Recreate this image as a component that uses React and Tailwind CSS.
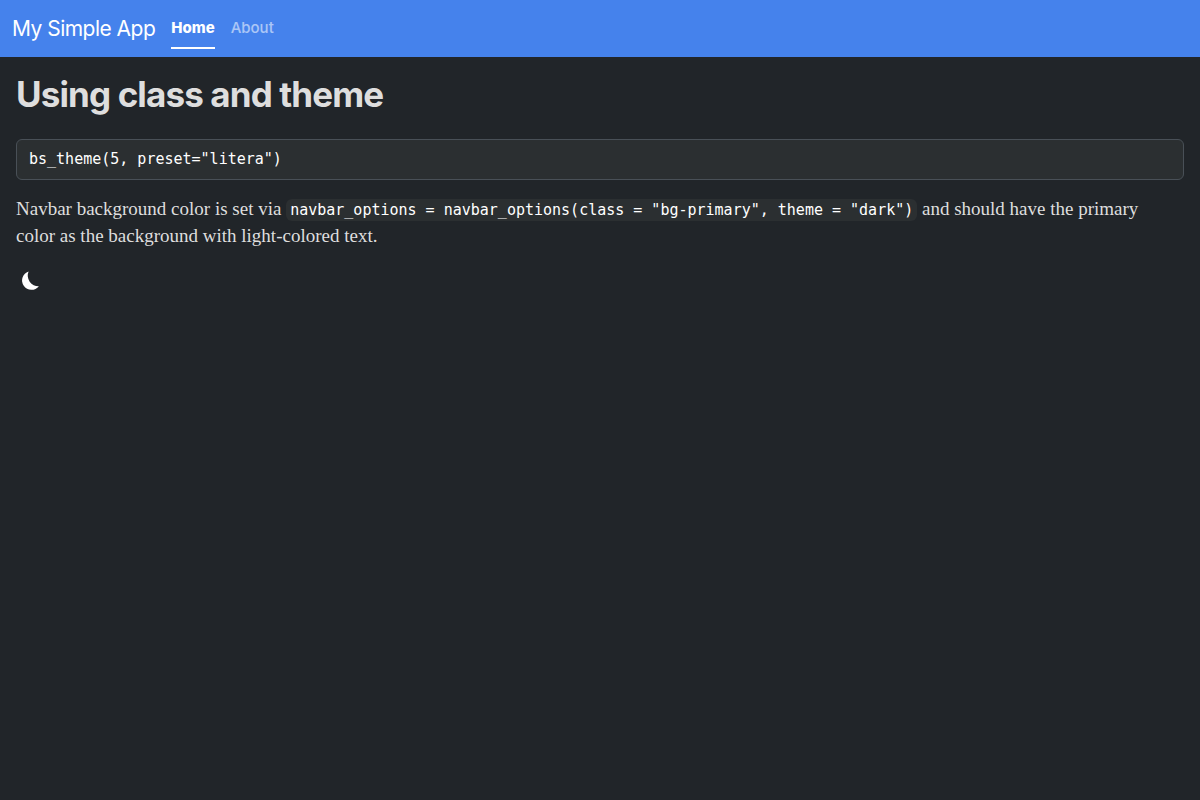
export default function App() {
  return (
    <div className="min-h-screen bg-[#212529] font-['Liberation_Serif',serif] text-[19px] leading-[27px] text-[#dedede]">
      <nav className="flex h-[57px] items-center bg-[#4582ec] px-3 font-[Inter,sans-serif]">
        <a href="#" className="mr-4 text-[21px] leading-8 text-white tracking-tight">
          My Simple App
        </a>
        <ul className="flex gap-4 text-[15px] leading-6">
          <li>
            <a href="#home" aria-current="page" className="block border-b-2 border-white pt-2 pb-[7px] font-extrabold text-white">
              Home
            </a>
          </li>
          <li>
            <a href="#about" className="block border-b-2 border-transparent pt-2 pb-[7px] font-medium text-white/55">
              About
            </a>
          </li>
        </ul>
      </nav>
      <main className="p-4">
        <h1 className="mb-6 font-[Inter,sans-serif] text-[35px] leading-[42px] font-bold tracking-tight">
          Using class and theme
        </h1>
        <pre className="mb-[15px] rounded-md border border-[#495057] bg-[#2b2f31] px-3 py-2 text-[15px] leading-[23px] text-white">
          <code className="block font-['DejaVu_Sans_Mono',monospace]">bs_theme(5, preset="litera")</code>
        </pre>
        <p className="mb-[15px] pr-4">
          Navbar background color is set via{" "}
          <code className="rounded-md bg-[#2b2f31] px-1 py-[2px] font-['DejaVu_Sans_Mono',monospace] text-[15px] leading-none text-white">
            navbar_options = navbar_options(class = "bg-primary", theme = "dark")
          </code>{" "}
          and should have the primary color as the background with light-colored text.
        </p>
        <button type="button" aria-label="Switch to light mode" className="ml-[2px] block pt-1 text-white">
          <svg viewBox="0 0 24 24" className="size-6" fill="currentColor" aria-hidden="true">
            <path d="M10.6 3.5A9.4 9.4 0 1 0 20.9 18.2A10.6 10.6 0 0 1 10.6 3.5Z" />
          </svg>
        </button>
      </main>
    </div>
  );
}
